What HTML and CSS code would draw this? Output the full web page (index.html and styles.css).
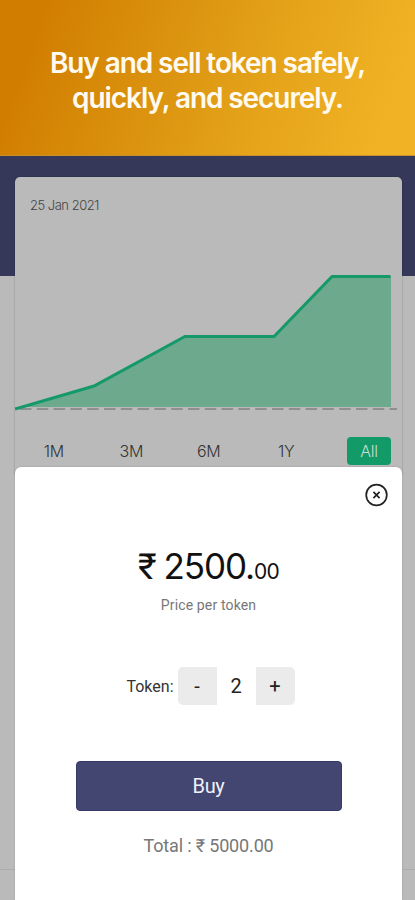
FILE: index.html
```
<!DOCTYPE html>
<html lang="en">

<head>
    <meta charset="UTF-8">
    <meta name="viewport" content="width=device-width, initial-scale=1.0">
    <title>Buy token</title>
    <link rel="stylesheet" href="styles.css">
</head>

<body>
    <header class="banner">
        <h1>Buy and sell token safely,<br>quickly, and securely.</h1>
    </header>

    <main class="screen">
        <section class="card">
            <div class="date">25 Jan 2021</div>
            <svg class="chart" width="387" height="150" viewBox="0 0 387 150">
                <path class="area" d="M0 143 L79 120 L170 70 H259 L317 10 H376 V141 H0 Z" />
                <path class="axis" d="M5 143 H382" />
                <path class="line" d="M0 143 L79 120 L170 70.5 H259 L317 10.5 H375.5" />
            </svg>
            <ul class="range">
                <li>1M</li>
                <li>3M</li>
                <li>6M</li>
                <li>1Y</li>
                <li class="active">All</li>
            </ul>
        </section>

        <section class="sheet">
            <div class="close">
                <svg width="24" height="24" viewBox="0 0 24 24">
                    <circle cx="11.5" cy="12" r="10.3" />
                    <path d="M8.4 8.9 L14.6 15.1 M14.6 8.9 L8.4 15.1" />
                </svg>
            </div>
            <div class="price">₹ <b>2500.</b><small>00</small></div>
            <p class="note">Price per token</p>
            <div class="token">
                <label>Token:</label>
                <div class="stepper">
                    <button>-</button>
                    <span>2</span>
                    <button>+</button>
                </div>
            </div>
            <button class="buy">Buy</button>
            <p class="total">Total : ₹ 5000.00</p>
        </section>
    </main>
</body>

</html>
```
FILE: styles.css
```
* {
    box-sizing: border-box;
}

body,
html {
    height: 100%;
    padding: 0;
    margin: 0;
    overflow: hidden;
    font-family: Roboto, "Liberation Sans", sans-serif;
}

body {
    display: flex;
    flex-direction: column;
}

.banner {
    flex: none;
    height: 156px;
    padding-top: 46px;
    background: linear-gradient(110deg, #d17e00 10%, #e2a018 58%, #f1b325 92%);
    border-bottom: 1px solid #c6902c;
}

.banner h1 {
    margin: 0;
    font: 600 28px/35px Inter, sans-serif;
    letter-spacing: -1.08px;
    text-align: center;
    color: #fffaf0;
}

.screen {
    flex: 1;
    display: flex;
    flex-direction: column;
    padding: 21px 13px 0 15px;
    background: linear-gradient(#353858 120px, #bababa 120px, #bababa 713px, #acacac 713px, #acacac 714px, #bababa 714px);
}

.card {
    height: 298px;
    border-radius: 5px 5px 0 0;
    background: #bababa;
    box-shadow: 0 0 2px rgba(0, 0, 0, .3);
}

.date {
    height: 89px;
    padding: 20px 0 0 15px;
    font: 300 13px/17px Inter, sans-serif;
    letter-spacing: -.5px;
    color: #444;
}

.chart {
    display: block;
}

.chart path {
    fill: none;
}

.chart .area {
    fill: #6daa8d;
}

.chart .axis {
    stroke: #818181;
    stroke-width: 1.5;
    stroke-dasharray: 11.5 5.3;
}

.chart .line {
    stroke: #16996a;
    stroke-width: 3;
}

.range {
    display: flex;
    margin: 21px 11px 0 0;
    padding: 0;
    list-style: none;
}

.range li {
    flex: none;
    width: 77.5px;
    font: 300 16px/28px Inter, sans-serif;
    letter-spacing: -.3px;
    text-align: center;
    color: #333;
}

.range .active {
    width: 44px;
    margin-left: auto;
    border-radius: 4px;
    background: #129a69;
    color: #c9dfd5;
}

.sheet {
    flex: 1;
    display: flex;
    flex-direction: column;
    align-items: center;
    margin-top: -8px;
    border-radius: 6px 6px 0 0;
    background: #fff;
    box-shadow: 0 0 2px rgba(0, 0, 0, .2);
}

.close {
    align-self: flex-end;
    height: 24px;
    margin: 16px 13px 0 0;
}

.close svg {
    display: block;
    fill: none;
    stroke: #222;
    stroke-width: 1.7;
}

.price {
    height: 42px;
    margin-top: 38px;
    font-size: 36px;
    line-height: 42px;
    color: #111;
}

.price b {
    margin-left: -2px;
    font: 400 35px/42px Inter, sans-serif;
    letter-spacing: -1.1px;
}

.price small {
    font: 400 21px/42px Inter, sans-serif;
    letter-spacing: -.8px;
}

.note {
    margin: 9px 0 0;
    font-size: 14px;
    line-height: 18px;
    letter-spacing: .15px;
    color: #777;
}

.token {
    display: flex;
    align-items: center;
    margin: 53px 0 0 4px;
    font-size: 16px;
    color: #333;
}

.stepper {
    display: flex;
    margin-left: 4px;
    border-radius: 5px;
    overflow: hidden;
    background: #ebebeb;
}

.stepper button,
.stepper span {
    width: 39px;
    height: 38px;
    padding: 0;
    border: 0;
    background: none;
    font: 20px/39px Roboto, sans-serif;
    text-align: center;
    color: #222;
}

.stepper span {
    background: #fff;
}

.buy {
    width: 266px;
    height: 50px;
    margin-top: 56px;
    border: 1px solid #363a66;
    border-radius: 4px;
    background: #434670;
    font: 20px Roboto, sans-serif;
    letter-spacing: -.3px;
    color: #f0f0f8;
}

.total {
    margin: 24px 0 0;
    font-size: 18px;
    line-height: 22px;
    letter-spacing: -.15px;
    color: #777;
}
```
